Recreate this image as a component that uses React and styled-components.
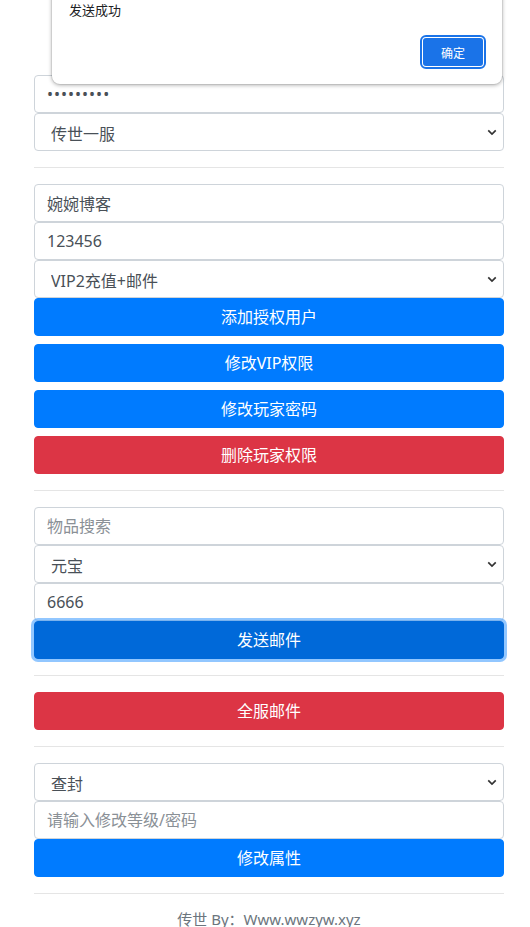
import React from 'react';
import styled, { createGlobalStyle, css } from 'styled-components';

const GlobalStyle = createGlobalStyle`
  * { box-sizing: border-box; }
  html, body {
    margin: 0;
    padding: 0;
    background: #ffffff;
    font-family: "Noto Sans", "Noto Sans CJK SC", sans-serif;
    color: #212529;
  }
`;

const Page = styled.div`
  position: relative;
  width: 530px;
  height: 927px;
  overflow: hidden;
`;

const Container = styled.div`
  width: 470px;
  margin-left: 34px;
  padding-top: 75px;
`;

const Group = styled.div`
  display: flex;
  flex-direction: column;
`;

const fieldBase = css`
  display: block;
  width: 100%;
  height: 38px;
  margin: 0;
  border: 1px solid #ced4da;
  border-radius: 4px;
  background: #ffffff;
  color: #495057;
  font-family: "Noto Sans", "Noto Sans CJK SC", sans-serif;
  font-size: 16px;
  line-height: 1.5;
  outline: none;
`;

const Input = styled.input`
  ${fieldBase};
  padding: 6px 12px;
  letter-spacing: ${({ type }) => (type === 'password' ? '1px' : 'normal')};
  &::placeholder {
    color: #8a9096;
  }
`;

const Select = styled.select`
  ${fieldBase};
  padding: 6px 32px 2px 16px;
  appearance: none;
  background-image: url("data:image/svg+xml,%3Csvg xmlns='http://www.w3.org/2000/svg' width='12' height='8' viewBox='0 0 12 8'%3E%3Cpath d='M1.5 1.5l4.5 4.5 4.5-4.5' fill='none' stroke='%23333' stroke-width='2'/%3E%3C/svg%3E");
  background-repeat: no-repeat;
  background-position: right 6px center;
  background-size: 10px 7px;
`;

const Divider = styled.hr`
  margin: 16px 0;
  border: 0;
  border-top: 1px solid rgba(0, 0, 0, 0.1);
`;

const tones = {
  primary: '#007bff',
  focused: '#0069d9',
  danger: '#dc3545',
};

const Button = styled.button`
  display: block;
  width: 100%;
  height: 38px;
  margin: 0;
  & + & {
    margin-top: 8px;
  }
  border: 1px solid ${({ $tone }) => tones[$tone]};
  border-radius: 4px;
  background: ${({ $tone }) => tones[$tone]};
  color: #ffffff;
  font-family: "Noto Sans", "Noto Sans CJK SC", sans-serif;
  font-size: 16px;
  line-height: 1.5;
  cursor: pointer;
  box-shadow: ${({ $tone }) =>
    $tone === 'focused' ? '0 0 0 3px rgba(38, 143, 255, 0.5)' : 'none'};
  position: relative;
`;

const Footer = styled.div`
  text-align: center;
  color: #6c757d;
  font-size: 15px;
  line-height: 20px;
  margin-top: -1px;
`;

const Dialog = styled.div`
  position: absolute;
  left: 52px;
  top: -40px;
  width: 450px;
  height: 124px;
  padding: 42px 17px 0;
  background: #ffffff;
  border-radius: 8px;
  box-shadow: 0 1px 4px rgba(0, 0, 0, 0.35), 0 0 0 1px rgba(0, 0, 0, 0.06);
  font-family: "Noto Sans CJK SC", sans-serif;
  z-index: 5;
`;

const DialogText = styled.div`
  font-size: 13px;
  color: #202124;
  line-height: 16px;
`;

const DialogActions = styled.div`
  display: flex;
  justify-content: flex-end;
  margin-top: 18px;
`;

const OkButton = styled.button`
  width: 64px;
  height: 32px;
  border: 2px solid #ffffff;
  outline: 2px solid #1a73e8;
  outline-offset: -1px;
  border-radius: 5px;
  background: #1a73e8;
  color: #ffffff;
  font-family: "Noto Sans CJK SC", sans-serif;
  font-size: 12px;
`;

export default function App() {
  return (
    <Page>
      <GlobalStyle />
      <Dialog>
        <DialogText>发送成功</DialogText>
        <DialogActions>
          <OkButton>确定</OkButton>
        </DialogActions>
      </Dialog>
      <Container>
        <Group>
          <Input type="password" defaultValue="123456789" />
          <Select defaultValue="1">
            <option value="1">传世一服</option>
          </Select>
        </Group>
        <Divider />
        <Group>
          <Input defaultValue="婉婉博客" />
          <Input defaultValue="123456" />
          <Select defaultValue="vip2">
            <option value="vip2">VIP2充值+邮件</option>
          </Select>
        </Group>
        <Button $tone="primary">添加授权用户</Button>
        <Button $tone="primary">修改VIP权限</Button>
        <Button $tone="primary">修改玩家密码</Button>
        <Button $tone="danger">删除玩家权限</Button>
        <Divider />
        <Group>
          <Input placeholder="物品搜索" />
          <Select defaultValue="yb">
            <option value="yb">元宝</option>
          </Select>
          <Input defaultValue="6666" />
        </Group>
        <Button $tone="focused">发送邮件</Button>
        <Divider />
        <Button $tone="danger">全服邮件</Button>
        <Divider />
        <Group>
          <Select defaultValue="cf">
            <option value="cf">查封</option>
          </Select>
          <Input placeholder="请输入修改等级/密码" />
        </Group>
        <Button $tone="primary">修改属性</Button>
        <Divider />
        <Footer>传世 By：Www.wwzyw.xyz</Footer>
      </Container>
    </Page>
  );
}
